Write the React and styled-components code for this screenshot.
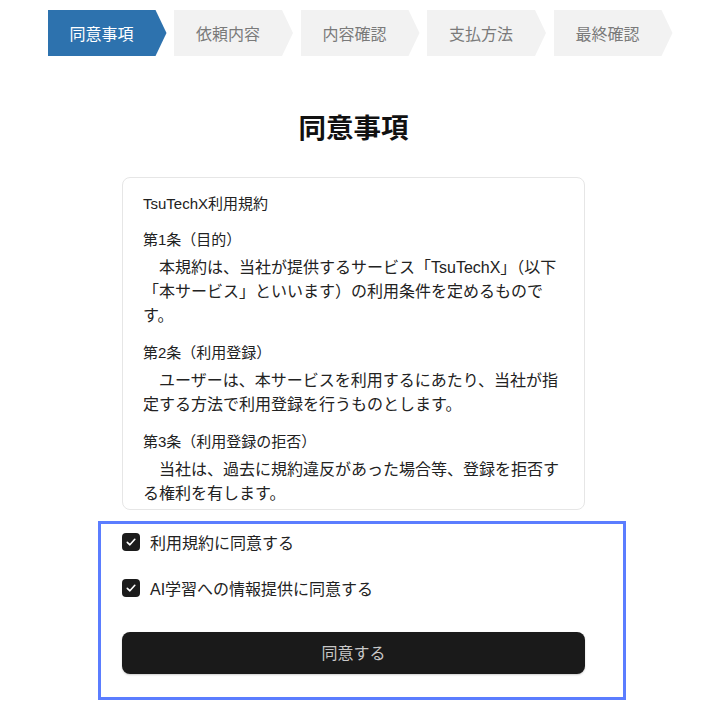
import React from 'react';
import styled, { createGlobalStyle } from 'styled-components';

const GlobalStyle = createGlobalStyle`
  body {
    margin: 0;
    background: #ffffff;
    font-family: "Liberation Sans", "Noto Sans CJK JP", sans-serif;
    color: #222222;
  }
`;

const Page = styled.div`
  width: 720px;
  min-height: 720px;
  display: flex;
  flex-direction: column;
  align-items: center;
`;

const Stepper = styled.ol`
  list-style: none;
  margin: 10px 0 0 0;
  padding: 0;
  display: flex;
  gap: 7.5px;
`;

const Step = styled.li`
  width: 119px;
  height: 46px;
  box-sizing: border-box;
  padding-right: 11px;
  display: flex;
  align-items: center;
  justify-content: center;
  font-size: 16px;
  background: ${p => (p.active ? '#2d72ae' : '#f2f2f2')};
  color: ${p => (p.active ? '#ffffff' : '#7a7a7a')};
  clip-path: polygon(0 0, calc(100% - 11px) 0, 100% 50%, calc(100% - 11px) 100%, 0 100%);
`;

const Content = styled.main`
  width: 463px;
  margin-left: -13px;
  display: flex;
  flex-direction: column;
  align-items: center;
`;

const Title = styled.h1`
  margin: 56px 0 0 0;
  font-size: 27.5px;
  line-height: 33px;
  font-weight: 700;
  color: #111111;
`;

const TermsCard = styled.div`
  width: 100%;
  box-sizing: border-box;
  margin-top: 32px;
  padding: 14px 20px 3px 20px;
  border: 1px solid #e6e6e6;
  border-radius: 8px;
  display: flex;
  flex-direction: column;
  gap: 13px;
`;

const CardTitle = styled.div`
  font-size: 15px;
  line-height: 24px;
  margin-bottom: -1px;
`;

const Article = styled.section`
  display: flex;
  flex-direction: column;
  gap: 4px;
`;

const ArticleHeading = styled.div`
  font-size: 15px;
  line-height: 24px;
  color: #222222;
`;

const ArticleBody = styled.p`
  margin: 0;
  font-size: 16px;
  line-height: 24px;
  text-indent: 1em;
  color: #222222;
`;

const ConsentBox = styled.div`
  width: 528px;
  box-sizing: border-box;
  margin: 11px 0 0 4px;
  padding: 8px 38px 23px 21px;
  border: 3px solid #5b7dff;
  display: flex;
  flex-direction: column;
`;

const CheckRow = styled.label`
  display: flex;
  align-items: center;
  gap: 10px;
  height: 24px;
  font-size: 16px;
  color: #222222;
  margin-bottom: ${p => p.spacing || 0}px;
`;

const CheckBox = styled.span`
  width: 18px;
  height: 18px;
  border-radius: 4px;
  background: #1c1c1c;
  display: flex;
  align-items: center;
  justify-content: center;
  margin-top: -4px;
  flex-shrink: 0;
`;

const CheckText = styled.span`
  line-height: 24px;
`;

const AgreeButton = styled.button`
  margin-top: 30px;
  width: 463px;
  height: 42px;
  border: none;
  border-radius: 8px;
  background: #1a1a1a;
  color: #c8c8c8;
  font-family: "Liberation Sans", "Noto Sans CJK JP", sans-serif;
  font-size: 16px;
  padding-bottom: 4px;
  box-shadow: 0 1px 2px rgba(0, 0, 0, 0.2);
  cursor: pointer;
`;

const steps = ['同意事項', '依頼内容', '内容確認', '支払方法', '最終確認'];

const articles = [
  {
    heading: '第1条（目的）',
    body: '本規約は、当社が提供するサービス「TsuTechX」（以下「本サービス」といいます）の利用条件を定めるものです。',
  },
  {
    heading: '第2条（利用登録）',
    body: 'ユーザーは、本サービスを利用するにあたり、当社が指定する方法で利用登録を行うものとします。',
  },
  {
    heading: '第3条（利用登録の拒否）',
    body: '当社は、過去に規約違反があった場合等、登録を拒否する権利を有します。',
  },
];

function Check() {
  return (
    <CheckBox>
      <svg width="12" height="12" viewBox="0 0 12 12">
        <polyline points="2.3,6.3 4.9,8.8 9.8,3.3" fill="none" stroke="#ffffff" strokeWidth="1.6" strokeLinecap="round" strokeLinejoin="round" />
      </svg>
    </CheckBox>
  );
}

export default function App() {
  return (
    <Page>
      <GlobalStyle />
      <Stepper>
        {steps.map((s, i) => (
          <Step key={s} active={i === 0}>{s}</Step>
        ))}
      </Stepper>
      <Content>
        <Title>同意事項</Title>
        <TermsCard>
          <CardTitle>TsuTechX利用規約</CardTitle>
          {articles.map(a => (
            <Article key={a.heading}>
              <ArticleHeading>{a.heading}</ArticleHeading>
              <ArticleBody>{a.body}</ArticleBody>
            </Article>
          ))}
        </TermsCard>
      </Content>
      <ConsentBox>
        <CheckRow spacing={22}>
          <Check />
          <CheckText>利用規約に同意する</CheckText>
        </CheckRow>
        <CheckRow>
          <Check />
          <CheckText>AI学習への情報提供に同意する</CheckText>
        </CheckRow>
        <AgreeButton>同意する</AgreeButton>
      </ConsentBox>
    </Page>
  );
}
